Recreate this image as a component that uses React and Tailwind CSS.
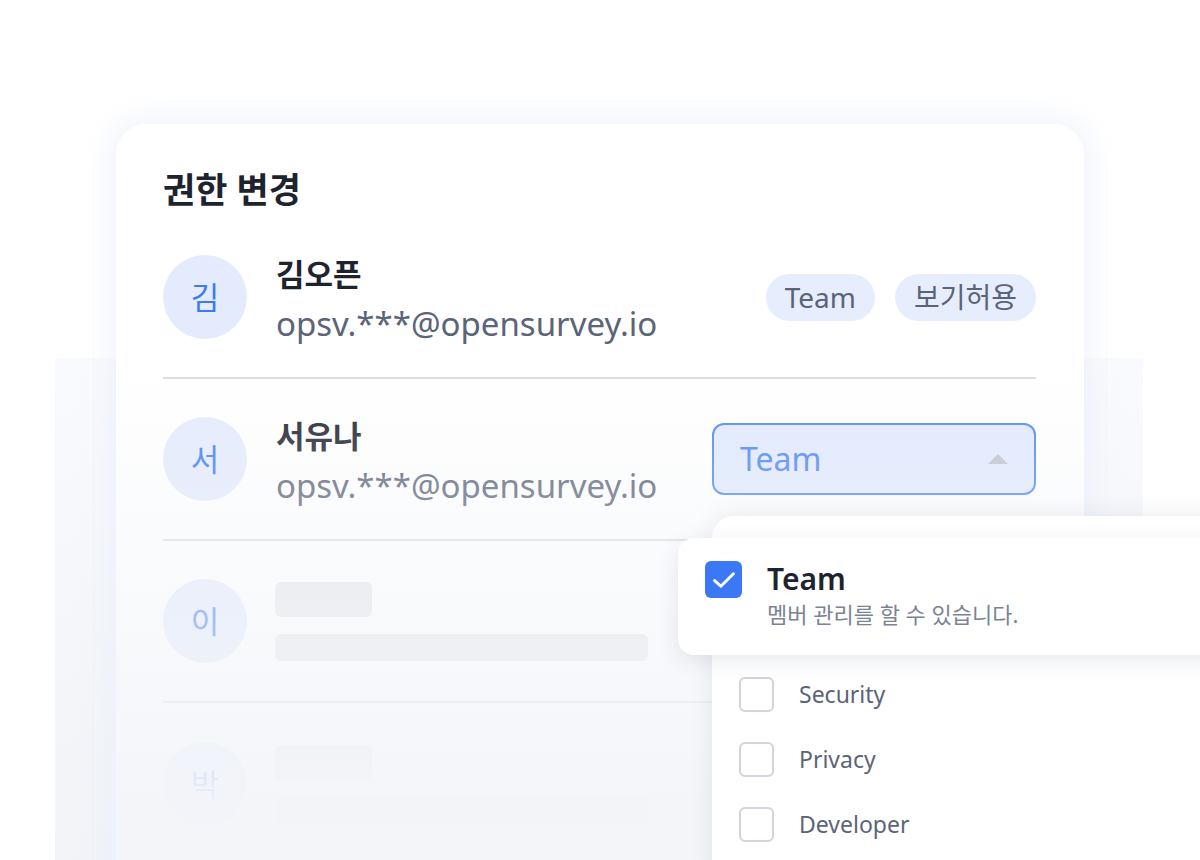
import React from 'react';

const font = "font-['Noto_Sans','Noto_Sans_CJK_KR',sans-serif]";

const Avatar = ({ char }) => (
  <div className="flex h-[84px] w-[84px] shrink-0 items-center justify-center rounded-full bg-[#e4ebfc] text-[31px] text-[#3b7bf6]">
    {char}
  </div>
);

const Pill = ({ children }) => (
  <span className="flex h-[47px] items-center rounded-full bg-[#e6edfc] px-[19px] text-[28px] text-[#5a6478]">{children}</span>
);

const MemberRow = ({ char, name, email, right, last }) => (
  <div className={`flex h-[162px] items-center ${last ? '' : 'border-b-2 border-[#d9dde4]'}`}>
    <Avatar char={char} />
    <div className="ml-[29px] mt-[6px] flex min-w-0 flex-1 flex-col">
      <p className="text-[31px] font-bold leading-[40px] text-[#1e2330]">{name}</p>
      <p className="mt-[8px] text-[33px] leading-[44px] text-[#5b6478]">{email}</p>
    </div>
    {right}
  </div>
);

const SkeletonRow = ({ char, last }) => (
  <div className={`flex h-[162px] items-center ${last ? '' : 'border-b-2 border-[#dde0e6]'}`}>
    <Avatar char={char} />
    <div className="ml-[28px] flex flex-col gap-[17px]">
      <div className="h-[35px] w-[97px] rounded-[6px] bg-[#e6e8ec]" />
      <div className="h-[27px] w-[373px] rounded-[6px] bg-[#e6e8ec]" />
    </div>
  </div>
);

const Option = ({ label }) => (
  <div className="flex h-[65px] items-center pl-[27px]">
    <div className="h-[35px] w-[35px] rounded-[6px] border-2 border-[#cfd4dd] bg-white" />
    <span className="ml-[25px] text-[23px] text-[#5b6478]">{label}</span>
  </div>
);

export default function App() {
  return (
    <div className={`relative h-[860px] w-[1200px] overflow-hidden bg-white ${font}`}>
      {/* back panel behind the card */}
      <div className="absolute left-[55px] top-[358px] h-[520px] w-[1088px] bg-[linear-gradient(to_bottom,#f9fafd,#f1f3f7)]" />

      <div className="relative pl-[116px] pt-[124px]">
        <div className="relative h-[800px] w-[968px] overflow-hidden rounded-[30px] bg-white px-[47px] pr-[48px] pt-[44px] shadow-[0_0_28px_6px_rgba(232,238,250,0.7)]">
          <h2 className="mb-[6px] text-[35px] font-bold leading-[44px] text-[#1e2330]">권한 변경</h2>

          <div className="-mt-[1px]">
            <MemberRow
              char="김"
              name="김오픈"
              email="opsv.***@opensurvey.io"
              right={
                <div className="flex gap-[20px]">
                  <Pill>Team</Pill>
                  <Pill>보기허용</Pill>
                </div>
              }
            />
            <MemberRow
              char="서"
              name="서유나"
              email="opsv.***@opensurvey.io"
              right={
                <div className="flex h-[72px] w-[324px] items-center justify-between rounded-[12px] border-2 border-[#4d87f5] bg-[#e1e9fd] pl-[26px] pr-[26px]">
                  <span className="text-[32px] text-[#4a85f4]">Team</span>
                  <svg width="20" height="10" viewBox="0 0 20 10">
                    <polygon points="10,0 20,10 0,10" fill="#bfc3ca" />
                  </svg>
                </div>
              }
            />
            <SkeletonRow char="이" />
            <SkeletonRow char="박" last />
          </div>

          {/* fade over the lower part of the card */}
          <div className="absolute left-0 top-[256px] h-[544px] w-full bg-[linear-gradient(to_bottom,rgba(243,245,249,0.05)_0px,rgba(243,245,249,0.22)_80px,rgba(243,245,249,0.55)_240px,rgba(243,245,249,0.95)_420px)]" />
        </div>
      </div>

      {/* dropdown panel */}
      <div className="absolute left-[712px] top-[516px] h-[400px] w-[560px] rounded-tl-[22px] bg-white shadow-[0_0_26px_rgba(30,45,80,0.09)]">
        <div className="pt-[146px]">
          <Option label="Security" />
          <Option label="Privacy" />
          <Option label="Developer" />
        </div>
      </div>

      {/* selected option */}
      <div className="absolute left-[678px] top-[538px] flex h-[117px] w-[560px] items-start rounded-[16px] bg-white pl-[27px] pt-[23px] shadow-[0_6px_22px_rgba(30,45,80,0.1)]">
        <div className="flex h-[37px] w-[37px] items-center justify-center rounded-[6px] bg-[#3b78f6]">
          <svg width="30" height="30" viewBox="0 0 24 24" fill="none">
            <path d="M4.5 12.5 L9.5 17 L19.5 7" stroke="white" strokeWidth="2.4" strokeLinecap="round" strokeLinejoin="round" />
          </svg>
        </div>
        <div className="ml-[25px] flex flex-col">
          <span className="text-[30px] font-semibold leading-[36px] text-[#1e2330]">Team</span>
          <span className="mt-[2px] text-[22px] leading-[30px] text-[#7b8394]">멤버 관리를 할 수 있습니다.</span>
        </div>
      </div>
    </div>
  );
}
